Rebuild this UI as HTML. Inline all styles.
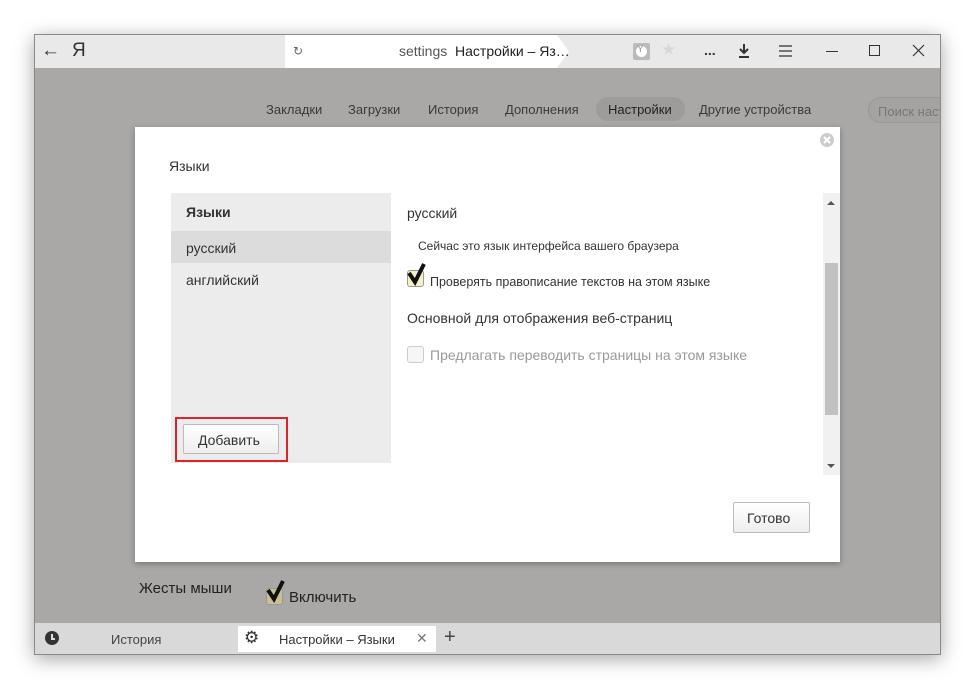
<!DOCTYPE html>
<html><head><meta charset="utf-8"><style>
*{margin:0;padding:0;box-sizing:border-box}
body{width:976px;height:689px;background:#fff;position:relative;overflow:hidden;font-family:"Liberation Sans","DejaVu Sans",sans-serif;color:#333}
.a{position:absolute}
.win{left:34px;top:34px;width:907px;height:621px;background:#a9a8a6;border:1px solid #8a8a8a;box-shadow:0 4px 18px rgba(0,0,0,.35);overflow:hidden}
.top{left:0;top:0;width:905px;height:33px;background:#e9e9e9}
.t{font-size:13px;white-space:nowrap}
.cb{width:17px;height:17px;border:1px solid #9a9a8a;border-radius:3px;background:#f7efc8}
</style></head><body>
<div class="a win">
 <div class="a top">
  <div class="a t" style="left:6px;top:5px;font-size:19px;color:#333">&#8592;</div>
  <div class="a t" style="left:37px;top:5px;font-size:19px;color:#333">Я</div>
  <svg class="a" style="left:250px;top:0" width="290" height="33"><polygon points="0,0 272,0 284,16.5 272,33 0,33" fill="#fff"/></svg>
  <div class="a t" style="left:258px;top:9px;font-size:12px;color:#666">&#8635;</div>
  <div class="a t" style="left:364px;top:8px;font-size:14px;color:#555">settings&nbsp; <span style="color:#222">Настройки – Яз…</span></div>
  <div class="a" style="left:598px;top:8px;width:17px;height:17px;background:#bbb;border-radius:2px"><div class="a" style="left:3px;top:3px;width:11px;height:11px;border-radius:50%;background:#fff"></div><div class="a t" style="left:4px;top:1px;font-size:10px;color:#999">Y</div></div>
  <div class="a t" style="left:626px;top:5px;font-size:17px;color:#d8d8d8">★</div>
  <div class="a t" style="left:669px;top:7px;font-size:14px;color:#333;font-weight:bold">...</div>
  <svg class="a" style="left:702px;top:8px" width="14" height="16"><path d="M7 1v9M3 6l4 4 4-4M2 14h10" stroke="#333" stroke-width="2" fill="none"/></svg>
  <svg class="a" style="left:744px;top:10px" width="13" height="12"><path d="M0 1h13M0 6h13M0 11h13" stroke="#333" stroke-width="1.2"/></svg>
  <div class="a" style="left:791px;top:16px;width:12px;height:1px;background:#333"></div>
  <div class="a" style="left:834px;top:10px;width:11px;height:11px;border:1px solid #333"></div>
  <svg class="a" style="left:877px;top:9px" width="13" height="13"><path d="M1 1l11 11M12 1L1 12" stroke="#333" stroke-width="1.2"/></svg>
 </div>
 <div class="a t" style="left:231px;top:67px;color:#3a3a3a">Закладки</div>
 <div class="a t" style="left:313px;top:67px;color:#3a3a3a">Загрузки</div>
 <div class="a t" style="left:393px;top:67px;color:#3a3a3a">История</div>
 <div class="a t" style="left:470px;top:67px;color:#3a3a3a">Дополнения</div>
 <div class="a" style="left:561px;top:62px;width:89px;height:24px;border-radius:12px;background:#9d9c9a"></div>
 <div class="a t" style="left:573px;top:67px;color:#222">Настройки</div>
 <div class="a t" style="left:664px;top:67px;color:#3a3a3a">Другие устройства</div>
 <div class="a" style="left:833px;top:62px;width:90px;height:26px;border-radius:13px;background:#a4a3a1;border:1px solid #999"></div>
 <div class="a t" style="left:843px;top:69px;color:#777">Поиск наст</div>
 <div class="a t" style="left:104px;top:545px;font-size:15px;color:#222">Жесты мыши</div>
 <div class="a cb" style="left:231px;top:553px;background:#c9c09b"></div>
 <svg class="a" style="left:231px;top:543px" width="24" height="28"><path d="M2 12l6 9L17 3" stroke="#111" stroke-width="4" fill="none"/></svg>
 <div class="a t" style="left:254px;top:554px;font-size:15px;color:#222">Включить</div>
 <div class="a" style="left:0;top:588px;width:905px;height:32px;background:#d9d9d9">
  <div class="a" style="left:10px;top:8px;width:14px;height:14px;border-radius:50%;background:#333"><div class="a" style="left:6px;top:3px;width:2px;height:5px;background:#ddd"></div><div class="a" style="left:6px;top:7px;width:4px;height:2px;background:#ddd"></div></div>
  <div class="a t" style="left:76px;top:9px;color:#444">История</div>
  <div class="a" style="left:203px;top:3px;width:198px;height:26px;background:#fff"></div>
  <div class="a t" style="left:209px;top:5px;font-size:17px;color:#333">⚙</div>
  <div class="a t" style="left:244px;top:9px;color:#333">Настройки – Языки</div>
  <div class="a t" style="left:381px;top:7px;font-size:14px;color:#777">✕</div>
  <div class="a t" style="left:409px;top:3px;font-size:20px;color:#444">+</div>
 </div>
</div>
<div class="a" style="left:135px;top:127px;width:705px;height:435px;background:#fff;box-shadow:0 2px 6px rgba(0,0,0,.3)">
 <svg class="a" style="left:685px;top:6px" width="14" height="14"><circle cx="7" cy="7" r="7" fill="#ccc"/><path d="M4 4l6 6M10 4l-6 6" stroke="#fff" stroke-width="2"/></svg>
 <div class="a t" style="left:34px;top:31px;font-size:14px;color:#333">Языки</div>
 <div class="a" style="left:36px;top:66px;width:220px;height:270px;background:#ececec">
  <div class="a t" style="left:15px;top:11px;font-size:14px;font-weight:bold;color:#333">Языки</div>
  <div class="a" style="left:0;top:38px;width:220px;height:32px;background:#dcdcdc"></div>
  <div class="a t" style="left:15px;top:47px;font-size:14px;color:#333">русский</div>
  <div class="a t" style="left:15px;top:79px;font-size:14px;color:#333">английский</div>
 </div>
 <div class="a" style="left:40px;top:290px;width:113px;height:45px;border:2px solid #d9232e"></div>
 <div class="a" style="left:48px;top:297px;width:96px;height:30px;border:1px solid #bbb;border-radius:2px;background:linear-gradient(#fff,#eee)"></div>
 <div class="a t" style="left:63px;top:305px;font-size:14px;color:#333">Добавить</div>
 <div class="a t" style="left:272px;top:78px;font-size:14px;color:#333">русский</div>
 <div class="a t" style="left:283px;top:112px;font-size:12px;color:#333">Сейчас это язык интерфейса вашего браузера</div>
 <div class="a cb" style="left:272px;top:143px"></div>
 <svg class="a" style="left:272px;top:134px" width="24" height="28"><path d="M2 12l6 9L17 3" stroke="#111" stroke-width="4" fill="none"/></svg>
 <div class="a t" style="left:295px;top:148px;font-size:12.5px;color:#333">Проверять правописание текстов на этом языке</div>
 <div class="a t" style="left:272px;top:183px;font-size:14px;color:#333">Основной для отображения веб-страниц</div>
 <div class="a cb" style="left:272px;top:219px;background:#f6f6f6;border-color:#ccc"></div>
 <div class="a t" style="left:295px;top:220px;font-size:14px;color:#999">Предлагать переводить страницы на этом языке</div>
 <div class="a" style="left:688px;top:66px;width:17px;height:282px;background:#f1f1f1">
  <div class="a" style="left:4px;top:8px;width:0;height:0;border-left:4px solid transparent;border-right:4px solid transparent;border-bottom:4px solid #555"></div>
  <div class="a" style="left:2px;top:70px;width:13px;height:152px;background:#c1c1c1"></div>
  <div class="a" style="left:4px;top:271px;width:0;height:0;border-left:4px solid transparent;border-right:4px solid transparent;border-top:4px solid #555"></div>
 </div>
 <div class="a" style="left:598px;top:375px;width:77px;height:31px;border:1px solid #bbb;border-radius:2px;background:linear-gradient(#fff,#eee)"></div>
 <div class="a t" style="left:612px;top:383px;font-size:14px;color:#333">Готово</div>
</div>
</body></html>
